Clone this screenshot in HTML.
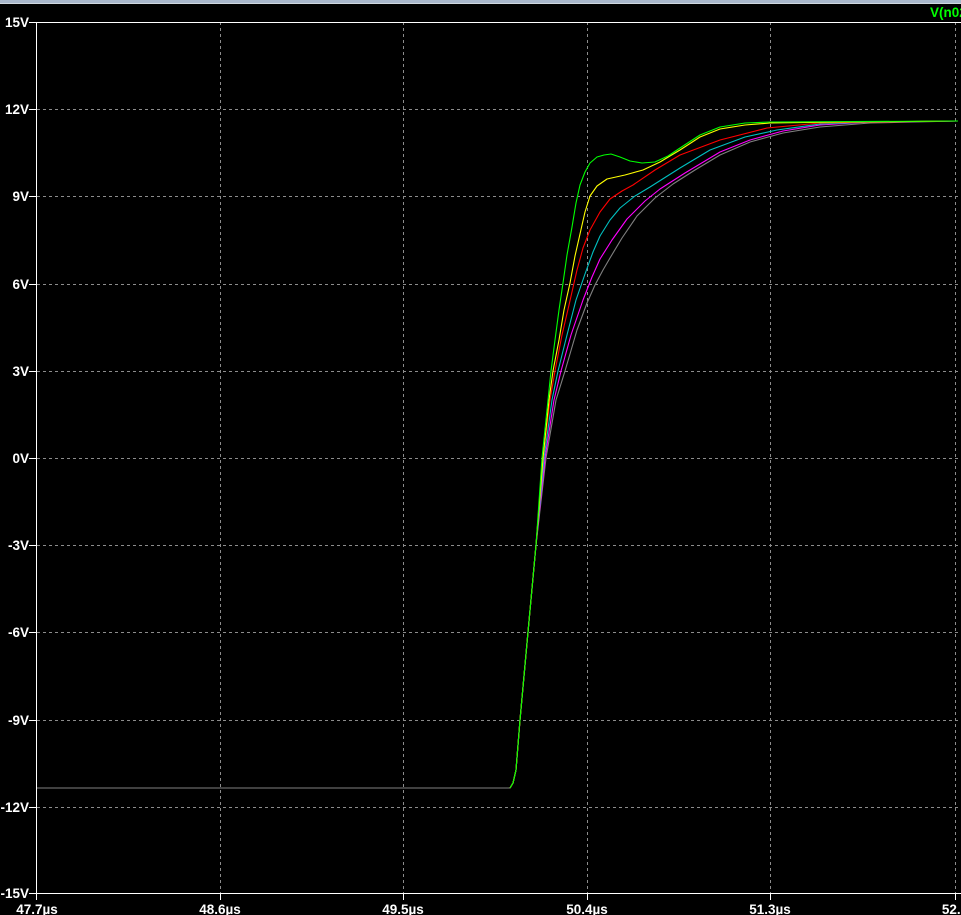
<!DOCTYPE html>
<html><head><style>
html,body{margin:0;padding:0;background:#000;width:961px;height:915px;overflow:hidden}
svg{display:block}
text{font-family:"Liberation Sans",sans-serif;font-weight:bold;font-size:13.5px;fill:#fff}
</style></head><body>
<svg width="961" height="915" viewBox="0 0 961 915">
<rect x="0" y="0" width="961" height="3" fill="#a9b8cc"/>
<rect x="0" y="3" width="961" height="1" fill="#d0d8e0"/>
<g stroke="#8c8c8c" stroke-width="1" stroke-dasharray="3,3">
<line x1="37" y1="109.5" x2="961" y2="109.5"/>
<line x1="37" y1="196.5" x2="961" y2="196.5"/>
<line x1="37" y1="284.5" x2="961" y2="284.5"/>
<line x1="37" y1="371.5" x2="961" y2="371.5"/>
<line x1="37" y1="458.5" x2="961" y2="458.5"/>
<line x1="37" y1="545.5" x2="961" y2="545.5"/>
<line x1="37" y1="632.5" x2="961" y2="632.5"/>
<line x1="37" y1="720.5" x2="961" y2="720.5"/>
<line x1="37" y1="807.5" x2="961" y2="807.5"/>
<line x1="220.5" y1="22" x2="220.5" y2="893"/>
<line x1="403.5" y1="22" x2="403.5" y2="893"/>
<line x1="587.5" y1="22" x2="587.5" y2="893"/>
<line x1="770.5" y1="22" x2="770.5" y2="893"/>
<line x1="955.5" y1="22" x2="955.5" y2="893"/>
</g>
<g stroke="#fff" stroke-width="1">
<line x1="29" y1="22.5" x2="961" y2="22.5"/>
<line x1="29" y1="893.5" x2="961" y2="893.5"/>
<line x1="36.5" y1="22" x2="36.5" y2="900"/>
<line x1="220.5" y1="893" x2="220.5" y2="900"/>
<line x1="403.5" y1="893" x2="403.5" y2="900"/>
<line x1="587.5" y1="893" x2="587.5" y2="900"/>
<line x1="770.5" y1="893" x2="770.5" y2="900"/>
<line x1="955.5" y1="893" x2="955.5" y2="900"/>
<line x1="29" y1="109.5" x2="36" y2="109.5"/><line x1="29" y1="196.5" x2="36" y2="196.5"/><line x1="29" y1="284.5" x2="36" y2="284.5"/><line x1="29" y1="371.5" x2="36" y2="371.5"/><line x1="29" y1="458.5" x2="36" y2="458.5"/><line x1="29" y1="545.5" x2="36" y2="545.5"/><line x1="29" y1="632.5" x2="36" y2="632.5"/><line x1="29" y1="720.5" x2="36" y2="720.5"/><line x1="29" y1="807.5" x2="36" y2="807.5"/>
</g>
<g text-anchor="end">
<text x="29" y="27">15V</text><text x="29" y="114">12V</text><text x="29" y="201">9V</text><text x="29" y="289">6V</text><text x="29" y="376">3V</text><text x="29" y="463">0V</text><text x="29" y="550">-3V</text><text x="29" y="637">-6V</text><text x="29" y="725">-9V</text><text x="29" y="812">-12V</text><text x="29" y="898">-15V</text>
</g>
<g text-anchor="middle">
<text x="37" y="914">47.7µs</text><text x="220" y="914">48.6µs</text><text x="403" y="914">49.5µs</text><text x="587" y="914">50.4µs</text><text x="770" y="914">51.3µs</text><text x="955" y="914">52.2</text>
</g>
<text x="930" y="17" style="fill:#00ff00">V(n02</text>
<g fill="none" stroke-width="1.1" stroke-linejoin="round">
<polyline stroke="#808080" points="37,788 510,788 513,783 516,770 520,720 528,632 536,545 546,458 556,400 565,371 577,330 587,303 595,285 603,270 610,258 622,238 637,216 655,198 673,184 695,170 720,155 750,142 783,133 820,127 870,123 958,121"/>
<polyline stroke="#ff00ff" points="510,788 513,783 516,770 520,720 528,632 536,545 545,458 554,400 561,371 571,335 583,300 592,277 600,259 612,240 627,219 645,201 660,189 685,173 720,152 750,140 783,131 820,125 870,122 958,121"/>
<polyline stroke="#00c0c0" points="510,788 513,783 516,770 520,720 528,632 536,545 544,458 552,400 558,371 567,335 576,300 585,274 593,252 600,236 610,220 620,208 635,196 650,187 680,168 710,150 745,137 777,130 820,124 870,122 958,121"/>
<polyline stroke="#ff0000" points="510,788 513,783 516,770 520,720 528,632 536,545 543,458 550,400 555,371 562,335 569,305 577,270 583,248 590,230 600,212 610,199 622,191 633,185 655,170 680,155 720,140 767,128 820,123 870,122 958,121"/>
<polyline stroke="#ffff00" points="510,788 513,783 516,770 520,720 528,632 536,545 543,458 549,400 553,371 559,340 564,310 570,283 575,256 580,234 585,212 590,196 597,186 607,179 625,175 643,170 660,162 680,150 700,137 720,129 745,125 770,123 850,122 958,121"/>
<polyline stroke="#00ff00" points="510,788 513,783 516,770 520,720 528,632 536,545 542,458 548,400 551,371 555,340 559,310 563,283 567,255 572,227 576,203 580,185 585,172 590,163 597,157 604,155 611,154 620,157 630,161 642,163 655,162 668,156 680,148 700,135 720,127 745,123 770,122 958,121"/>
</g>
</svg>
</body></html>
